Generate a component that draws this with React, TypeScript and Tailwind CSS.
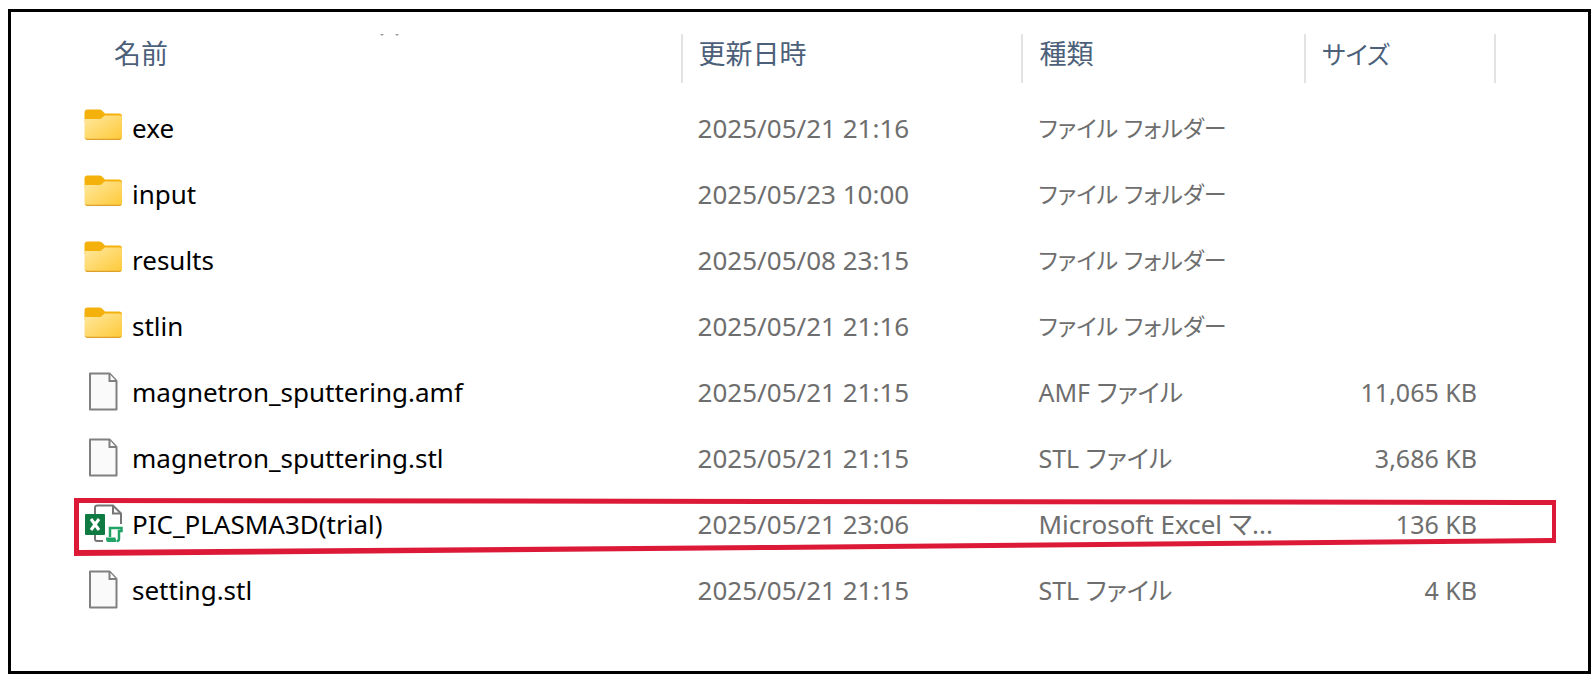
import React from 'react';

type Kind = 'folder' | 'file' | 'excel';

interface Entry {
  name: string;
  kind: Kind;
  date: string;
  type: string;
  size: string;
  marked?: boolean;
}

const entries: Entry[] = [
  { name: 'exe', kind: 'folder', date: '2025/05/21 21:16', type: 'ファイル フォルダー', size: '' },
  { name: 'input', kind: 'folder', date: '2025/05/23 10:00', type: 'ファイル フォルダー', size: '' },
  { name: 'results', kind: 'folder', date: '2025/05/08 23:15', type: 'ファイル フォルダー', size: '' },
  { name: 'stlin', kind: 'folder', date: '2025/05/21 21:16', type: 'ファイル フォルダー', size: '' },
  { name: 'magnetron_sputtering.amf', kind: 'file', date: '2025/05/21 21:15', type: 'AMF ファイル', size: '11,065 KB' },
  { name: 'magnetron_sputtering.stl', kind: 'file', date: '2025/05/21 21:15', type: 'STL ファイル', size: '3,686 KB' },
  { name: 'PIC_PLASMA3D(trial)', kind: 'excel', date: '2025/05/21 23:06', type: 'Microsoft Excel マ...', size: '136 KB', marked: true },
  { name: 'setting.stl', kind: 'file', date: '2025/05/21 21:15', type: 'STL ファイル', size: '4 KB' },
];

function FolderIcon() {
  return (
    <svg viewBox="0 0 40 40" className="h-10 w-10 shrink-0" aria-hidden="true">
      <defs>
        <linearGradient id="folder-front" x1="0" y1="0" x2="1" y2="1">
          <stop offset="0" stopColor="#ffe8a0" />
          <stop offset="1" stopColor="#fdc937" />
        </linearGradient>
      </defs>
      <path d="M3.500 1.500h12c1 0 1.800.4 2.500 1l3 3H35c2 0 3 1 3 3V14H.5V4.500c0-2 1-3 3-3z" fill="#f4b10b" />
      <path d="M.5 11h14.500c1.200 0 2-.3 3-1l2.500-2.500H36c1.500 0 2 .8 2 2V29c0 1.800-1 3-3 3H3.500c-2 0-3-1.200-3-3z" fill="url(#folder-front)" />
      <path d="M1 30c.5 1.200 1.300 2 2.500 2H35c1.300 0 2.200-.8 2.700-2-.8.600-1.700.8-2.700.8H3.500c-1 0-1.900-.2-2.500-.8z" fill="#dda02b" />
    </svg>
  );
}

function FileIcon() {
  return (
    <svg viewBox="0 0 40 40" className="h-10 w-10 shrink-0" aria-hidden="true">
      <path d="M6 1.500h19.500L32.500 9v28.500H6z" fill="#fafafa" stroke="#808080" strokeWidth="2" strokeLinejoin="round" />
      <path d="M25.500 2v7H32" fill="#fff" stroke="#808080" strokeWidth="2" />
    </svg>
  );
}

function ExcelIcon() {
  return (
    <svg viewBox="0 0 40 40" className="h-10 w-10 shrink-0" aria-hidden="true">
      <path d="M11 10V3.500C11 2 12 1.500 13.500 1.500H29l8 8V20" fill="none" stroke="#767676" strokeWidth="2" />
      <path d="M29 1.500v8h8M11 31v4c0 1.200.8 2 2 2h6" fill="none" stroke="#767676" strokeWidth="2" />
      <rect x="1" y="10" width="20" height="21" rx="1" fill="#0f7a41" />
      <path d="M7 15l8 11M15 15l-8 11" stroke="#fff" strokeWidth="3" />
      <path d="M26 33V24h11.500v3H35v7.500c0 1.500-.8 2.500-2 2.500" fill="#fff" stroke="#21a366" strokeWidth="2.500" />
      <path d="M22 33.500h9.500c0 1.500.5 2.500 1.500 3.500l-1 1h-8c-1.500 0-2-1.500-2-4.500z" fill="#21a366" />
    </svg>
  );
}

const icons = { folder: FolderIcon, file: FileIcon, excel: ExcelIcon };

// hand-drawn red frame, slightly narrower on the right
function RedMark() {
  return (
    <svg
      viewBox="0 0 1482 60"
      preserveAspectRatio="none"
      className="pointer-events-none absolute inset-x-0 top-1/2 h-[60px] w-full -translate-y-1/2 overflow-visible"
      aria-hidden="true"
    >
      <path
        fillRule="evenodd"
        d="M0 4L1482 6V49L700 56L0 62zM5 9V56L700 51L1478 44V11z"
        fill="#dc1a38"
      />
    </svg>
  );
}

function HeaderCell({ label, first, kana }: { label: string; first?: boolean; kana?: boolean }) {
  return (
    <th scope="col" className="relative border-r-2 border-[#e3e3e3] p-0 text-left align-top font-normal">
      <button
        type="button"
        className={`h-10 leading-10 text-[#4c607a] ${kana ? 'text-[25px]' : 'text-[27px]'} ${first ? 'pl-10' : 'pl-4'}`}
      >
        {label}
      </button>
      {first && (
        <svg viewBox="0 0 24 4" className="absolute top-0 left-1/2 h-1 w-6" aria-hidden="true">
          <path d="M3 0h4L5 2zM18 0h4l-2 2z" fill="#9a9a9a" />
        </svg>
      )}
    </th>
  );
}

export default function App() {
  return (
    <div className="min-h-screen bg-white pt-[9px] pr-[3px] pb-[5px] pl-2 font-['Noto_Sans','Noto_Sans_CJK_JP',sans-serif]">
      <main className="min-h-[665px] border-3 border-black pt-[22px] pr-8 pl-[63px]">
        <table className="w-full table-fixed border-collapse text-[25px] leading-8 [font-feature-settings:'palt']">
          <colgroup>
            <col className="w-[41%]" />
            <col className="w-[23%]" />
            <col />
            <col className="w-[190px]" />
            <col className="w-[61px]" />
          </colgroup>
          <thead>
            <tr className="h-[49px]">
              <HeaderCell label="名前" first />
              <HeaderCell label="更新日時" />
              <HeaderCell label="種類" />
              <HeaderCell label="サイズ" kana />
              <td />
            </tr>
          </thead>
          <tbody>
            <tr className="h-3" aria-hidden="true">
              <td colSpan={5} />
            </tr>
            {entries.map((entry) => {
              const Icon = icons[entry.kind];
              return (
                <tr key={entry.name} className="relative h-[66px] whitespace-nowrap text-[#6e6e6e]">
                  <td className="p-0 pl-[10px]">
                    <div className="flex items-center gap-2 text-[26px] text-black">
                      <Icon />
                      <span>{entry.name}</span>
                    </div>
                    {entry.marked && <RedMark />}
                  </td>
                  <td className="p-0 pl-4 text-[26px]">{entry.date}</td>
                  <td className={`p-0 pl-4 ${entry.kind === 'folder' ? 'text-[23px]' : ''} ${entry.kind === 'excel' ? 'text-[26px]' : ''}`}>
                    {entry.type}
                  </td>
                  <td className="p-0 pr-[18px] text-right">{entry.size}</td>
                  <td />
                </tr>
              );
            })}
          </tbody>
        </table>
      </main>
    </div>
  );
}
